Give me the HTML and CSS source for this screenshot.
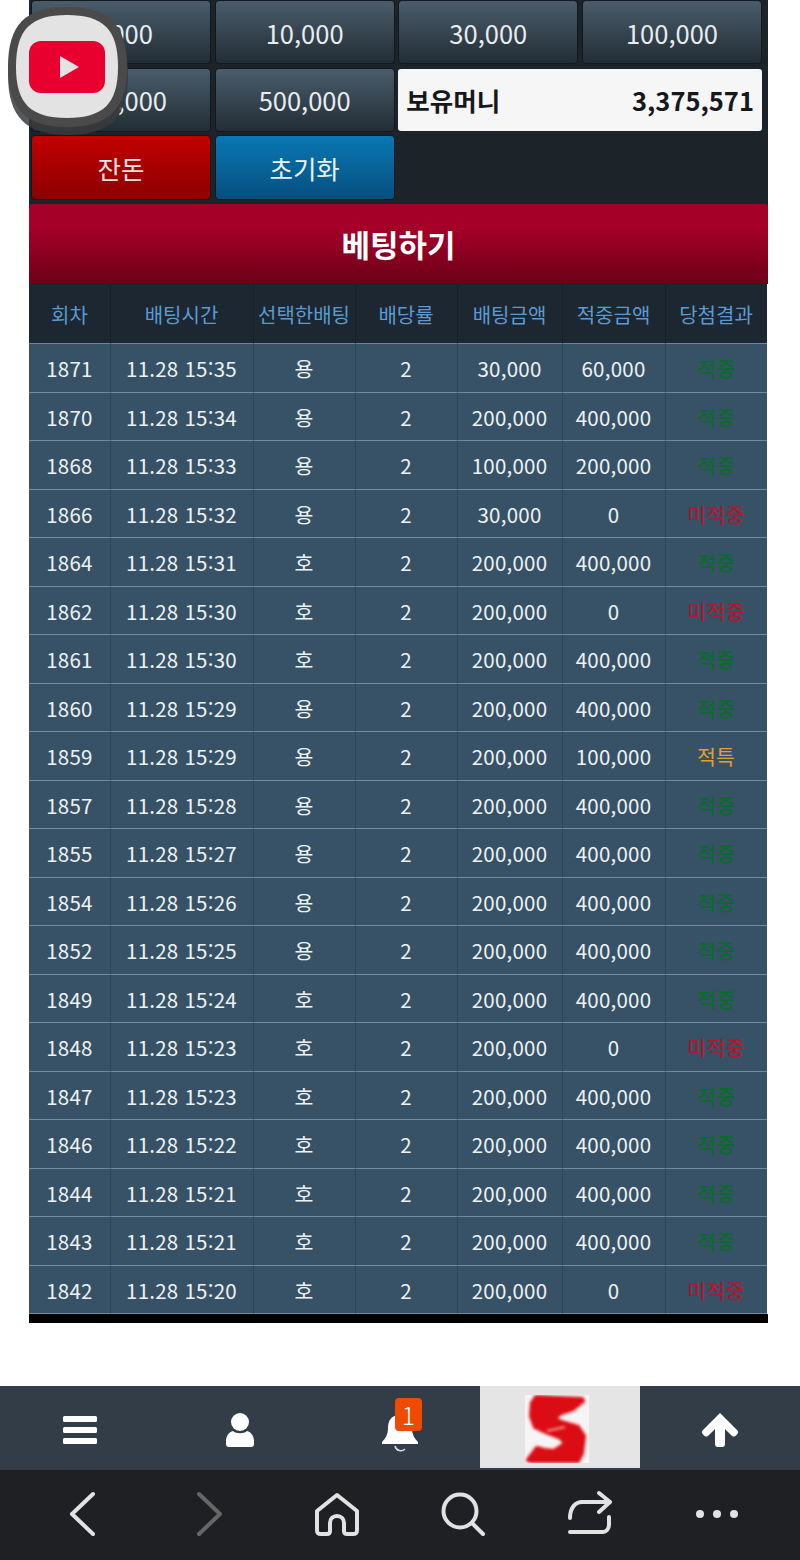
FILE: index.html
```html
<!DOCTYPE html>
<html lang="ko">
<head>
<meta charset="UTF-8">
<title>베팅하기</title>
<link rel="stylesheet" href="styles.css">
</head>
<body>
<div class="page">
	<svg class="float-app" width="122" height="130" viewBox="0 0 122 130">
		<path d="M60 8 C102 8 120 26 120 68 C120 110 102 128 60 128 C18 128 0 110 0 68 C0 26 18 8 60 8 Z" fill="#3a3b3d" opacity=".85"/>
		<path d="M59 0 C101 0 119 18 119 60 C119 102 101 120 59 120 C17 120 0 102 0 60 C0 18 17 0 59 0 Z" fill="#4a4a4b"/>
		<path d="M59 8 C95 8 110 22 110 60 C110 97 95 111 59 111 C23 111 8 97 8 60 C8 22 23 8 59 8 Z" fill="#e3e3e3"/>
		<rect x="21" y="34" width="76" height="52" rx="12" fill="#e8002f"/>
		<path d="M52 49 L71 60 L52 71 Z" fill="#e3e3e3"/>
	</svg>

	<div class="panel">
		<div class="chips">
			<div class="chip">5,000</div>
			<div class="chip">10,000</div>
			<div class="chip">30,000</div>
			<div class="chip">100,000</div>
			<div class="chip">300,000</div>
			<div class="chip">500,000</div>
			<div class="money"><span>보유머니</span><span>3,375,571</span></div>
			<div class="chip chip-red">잔돈</div>
			<div class="chip chip-blue">초기화</div>
		</div>
		<div class="bet-btn">베팅하기</div>
	</div>

	<table class="bet-table">
		<colgroup>
			<col class="c1"><col class="c2"><col class="c3"><col class="c4"><col class="c5"><col class="c6"><col class="c7">
		</colgroup>
		<thead>
			<tr><th>회차</th><th>배팅시간</th><th>선택한배팅</th><th>배당률</th><th>배팅금액</th><th>적중금액</th><th>당첨결과</th></tr>
		</thead>
		<tbody>
			<tr><td>1871</td><td>11.28 15:35</td><td>용</td><td>2</td><td>30,000</td><td>60,000</td><td class="win">적중</td></tr>
			<tr><td>1870</td><td>11.28 15:34</td><td>용</td><td>2</td><td>200,000</td><td>400,000</td><td class="win">적중</td></tr>
			<tr><td>1868</td><td>11.28 15:33</td><td>용</td><td>2</td><td>100,000</td><td>200,000</td><td class="win">적중</td></tr>
			<tr><td>1866</td><td>11.28 15:32</td><td>용</td><td>2</td><td>30,000</td><td>0</td><td class="lose">미적중</td></tr>
			<tr><td>1864</td><td>11.28 15:31</td><td>호</td><td>2</td><td>200,000</td><td>400,000</td><td class="win">적중</td></tr>
			<tr><td>1862</td><td>11.28 15:30</td><td>호</td><td>2</td><td>200,000</td><td>0</td><td class="lose">미적중</td></tr>
			<tr><td>1861</td><td>11.28 15:30</td><td>호</td><td>2</td><td>200,000</td><td>400,000</td><td class="win">적중</td></tr>
			<tr><td>1860</td><td>11.28 15:29</td><td>용</td><td>2</td><td>200,000</td><td>400,000</td><td class="win">적중</td></tr>
			<tr><td>1859</td><td>11.28 15:29</td><td>용</td><td>2</td><td>200,000</td><td>100,000</td><td class="tie">적특</td></tr>
			<tr><td>1857</td><td>11.28 15:28</td><td>용</td><td>2</td><td>200,000</td><td>400,000</td><td class="win">적중</td></tr>
			<tr><td>1855</td><td>11.28 15:27</td><td>용</td><td>2</td><td>200,000</td><td>400,000</td><td class="win">적중</td></tr>
			<tr><td>1854</td><td>11.28 15:26</td><td>용</td><td>2</td><td>200,000</td><td>400,000</td><td class="win">적중</td></tr>
			<tr><td>1852</td><td>11.28 15:25</td><td>용</td><td>2</td><td>200,000</td><td>400,000</td><td class="win">적중</td></tr>
			<tr><td>1849</td><td>11.28 15:24</td><td>호</td><td>2</td><td>200,000</td><td>400,000</td><td class="win">적중</td></tr>
			<tr><td>1848</td><td>11.28 15:23</td><td>호</td><td>2</td><td>200,000</td><td>0</td><td class="lose">미적중</td></tr>
			<tr><td>1847</td><td>11.28 15:23</td><td>호</td><td>2</td><td>200,000</td><td>400,000</td><td class="win">적중</td></tr>
			<tr><td>1846</td><td>11.28 15:22</td><td>호</td><td>2</td><td>200,000</td><td>400,000</td><td class="win">적중</td></tr>
			<tr><td>1844</td><td>11.28 15:21</td><td>호</td><td>2</td><td>200,000</td><td>400,000</td><td class="win">적중</td></tr>
			<tr><td>1843</td><td>11.28 15:21</td><td>호</td><td>2</td><td>200,000</td><td>400,000</td><td class="win">적중</td></tr>
			<tr><td>1842</td><td>11.28 15:20</td><td>호</td><td>2</td><td>200,000</td><td>0</td><td class="lose">미적중</td></tr>
		</tbody>
	</table>
	<div class="table-end"></div>

	<div class="site-nav">
		<div class="nav-cell">
			<svg width="36" height="30" viewBox="0 0 36 30" fill="#fff"><rect x="1" y="1" width="34" height="6" rx="1.5"/><rect x="1" y="12" width="34" height="6" rx="1.5"/><rect x="1" y="23" width="34" height="6" rx="1.5"/></svg>
		</div>
		<div class="nav-cell">
			<svg width="30" height="36" viewBox="0 0 30 36" fill="#fff"><circle cx="15" cy="10" r="9"/><path d="M8 19 C11 22 19 22 22 19 C26 20 29 24 29 29 V32 C29 34 28 35 26 35 H4 C2 35 1 34 1 32 V29 C1 24 4 20 8 19 Z"/></svg>
		</div>
		<div class="nav-cell">
			<svg class="bell" width="38" height="38" viewBox="0 0 38 38" fill="#fff"><path d="M19 1 C28 1 31 7 31 14 C31 21 34 25 37 28 V30 H1 V28 C4 25 7 21 7 14 C7 7 10 1 19 1 Z"/><path d="M14 32 C15 37 21 38 24 35" fill="none" stroke="#d8dcdf" stroke-width="1.500"/></svg>
			<span class="badge">1</span>
		</div>
		<div class="nav-cell nav-logo">
			<svg class="logo" width="64" height="68" viewBox="0 0 64 68"><rect width="64" height="68" fill="#f6f4f4"/><path class="logo-s" d="M11 2 L57 4 L58 6 L48 14 L36 18 L29 23 L36 27 L53 32 L59 41 L57 58 L53 66 L7 66 L3 65 L12 53 L19 55 L29 56 L40 49 L36 43 L23 38 L10 32 L6 21 L7 8 Z" fill="#dc0c14" stroke="#dc0c14" stroke-width="4" stroke-linejoin="round"/><path class="logo-s" d="M22 36 L40 32" stroke="#f0a0a0" stroke-width="2" fill="none"/></svg>
		</div>
		<div class="nav-cell">
			<svg width="38" height="36" viewBox="0 0 38 36" fill="#fff"><path d="M19 1 L36 18 C37.500 19.500 37.500 21 36 22.500 L35 23.500 C33.500 25 32 25 30.500 23.500 L24 17 V32 C24 34 23 35 21 35 H17 C15 35 14 34 14 32 V17 L7.500 23.500 C6 25 4.500 25 3 23.500 L2 22.500 C.5 21 .5 19.500 2 18 Z"/></svg>
		</div>
	</div>

	<div class="browser-bar">
		<svg width="48" height="48" viewBox="0 0 48 48" class="tool"><path d="M34 4 L13 24 L34 44"/></svg>
		<svg width="48" height="48" viewBox="0 0 48 48" class="tool off"><path d="M13 4 L34 24 L13 44"/></svg>
		<svg width="48" height="48" viewBox="0 0 48 48" class="tool"><path d="M4 21 L24 5 L44 21 V40 C44 43 43 44 40 44 H34 C32 44 31 43 31 41 V33 C31 29 28 26 24 26 C20 26 17 29 17 33 V41 C17 43 16 44 14 44 H8 C5 44 4 43 4 40 Z"/></svg>
		<svg width="48" height="48" viewBox="0 0 48 48" class="tool"><circle cx="21" cy="21" r="16.500"/><path d="M33 33 L44 44"/></svg>
		<svg width="48" height="48" viewBox="0 0 48 48" class="tool"><path d="M4 28 C4 17 10 12 16 12 H44 M33 3 L44 12 L33 22 M43 27 V35 C43 39 40 42 37 42 H4"/></svg>
		<svg width="48" height="48" viewBox="0 0 48 48" class="tool-dots"><circle cx="7" cy="24" r="4"/><circle cx="24" cy="24" r="4"/><circle cx="41" cy="24" r="4"/></svg>
	</div>
</div>
</body>
</html>
```

FILE: styles.css
```css
* { box-sizing: border-box; }
html, body { margin: 0; padding: 0; background: #fff; }
body { font-family: "Noto Sans CJK KR", "Noto Sans", sans-serif; }

.page { position: relative; width: 800px; height: 1560px; overflow: hidden; }

/* floating app button */
.float-app { position: absolute; left: 8px; top: 7px; z-index: 5; }

/* top panel */
.panel { width: 739px; margin-left: 29px; background: #1c2429; }
.chips {
	display: grid; grid-template-columns: repeat(4, 180px); grid-auto-rows: 64.3px;
	gap: 3.4px 3.67px; padding: 0 0 4.7px 2px;
}
.chip {
	display: flex; align-items: center; justify-content: center;
	background: linear-gradient(#4a5c6b, #222d35);
	border: 1px solid #12181c; border-radius: 4px;
	color: #e8edef; font-size: 25.5px;
}
.chip-red { background: linear-gradient(#c20000, #8c0000); color: #f0e4e4; }
.chip-blue { background: linear-gradient(#0a78b4, #064f7e); color: #e8f2f6; }
.money {
	grid-column: span 2; display: flex; justify-content: space-between; align-items: center;
	margin: 1px 0; padding: 0 8px;
	background: #f6f6f7; border-radius: 3px;
	color: #16191c; font-size: 25.5px; font-weight: 700;
}
.bet-btn {
	height: 80px; line-height: 80px; text-align: center;
	background: linear-gradient(#a50028 30%, #6c0016);
	border-radius: 3px 3px 0 0;
	color: #fff; font-size: 31px; font-weight: 700;
}

/* result table */
.bet-table { width: 738px; margin: 0 0 0 29px; border-collapse: separate; border-spacing: 0; table-layout: fixed; }
.c1 { width: 81px; }
.c2 { width: 143px; }
.c3 { width: 102px; }
.c4 { width: 102px; }
.c5 { width: 105px; }
.c6 { width: 103px; }
.c7 { width: 102px; }
.bet-table th {
	height: 60px; padding: 0 1px 0 0; background: #1c2731;
	border-bottom: 1px solid #71858f; border-left: 1px solid #18212a; border-top: 1px solid #1c2429;
	color: #5b9bd1; font-size: 20px; font-weight: 400;
}
.bet-table td {
	height: 48.5px; padding: 0 1px 0 0; text-align: center; background: #375267;
	border-bottom: 1px solid #6f8ea3; border-left: 1px solid #2e4659;
	color: #eef2f4; font-size: 20.5px; letter-spacing: .25px;
}
.bet-table th:first-child, .bet-table td:first-child { border-left: 0; padding: 0; }
.bet-table td.win { color: #0b6b2b; font-weight: 500; }
.bet-table td.lose { color: #ab1a30; font-weight: 500; }
.bet-table td.tie { color: #e0a030; }
.table-end { width: 739px; height: 9px; margin: 0 0 63px 29px; background: #000; }

/* site nav */
.site-nav { display: flex; height: 84px; background: #333d47; }
.nav-cell { position: relative; flex: 1; display: flex; align-items: center; justify-content: center; padding-top: 4px; }
.nav-logo { height: 82px; background: #e5e5e5; }
.logo { margin-right: 7px; }
.logo-s { filter: blur(1.5px); }
.bell { margin-top: 6px; }
.badge {
	position: absolute; left: 75px; top: 12px; width: 27px; height: 33px;
	background: #f04a00; border-radius: 4px;
	color: #fff; font-size: 25px; font-weight: 300; line-height: 33px; text-align: center;
}

/* browser toolbar */
.browser-bar {
	display: flex; align-items: center; justify-content: space-around;
	height: 90px; padding: 0 20px 2px; background: #1e2024;
}
.tool { fill: none; stroke: #e2e2e2; stroke-width: 4; stroke-linecap: round; stroke-linejoin: round; }
.tool.off { stroke: #666; }
.tool-dots { fill: #e2e2e2; }
```
